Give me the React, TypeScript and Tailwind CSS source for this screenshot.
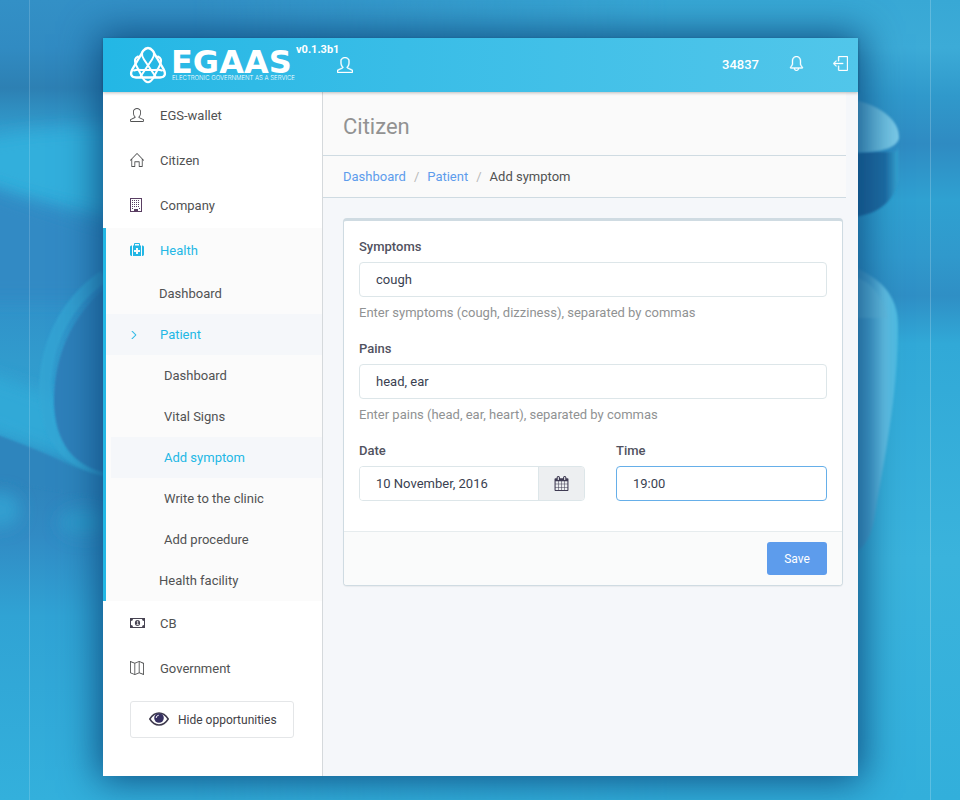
import React, { useState } from "react";
import { SlUser, SlHome, SlBell, SlLogout, SlMap, SlArrowRight } from "react-icons/sl";

function Backdrop() {
  return (
    <svg
      className="absolute inset-0 h-full w-full"
      viewBox="0 0 960 800"
      preserveAspectRatio="none"
      aria-hidden="true"
    >
      <defs>
        <linearGradient id="leftSide" x1="0" y1="0" x2="0" y2="1">
          <stop offset="0" stopColor="#3390c6" />
          <stop offset="0.06" stopColor="#318bc2" />
          <stop offset="0.11" stopColor="#2d80b3" />
          <stop offset="0.16" stopColor="#319bcc" />
          <stop offset="0.22" stopColor="#31a5d5" />
          <stop offset="0.3" stopColor="#318bc4" />
          <stop offset="0.36" stopColor="#308fc8" />
          <stop offset="0.45" stopColor="#319bcd" />
          <stop offset="0.53" stopColor="#309fd0" />
          <stop offset="0.59" stopColor="#2e83ba" />
          <stop offset="0.67" stopColor="#318bc4" />
          <stop offset="0.77" stopColor="#30a3d4" />
          <stop offset="1" stopColor="#33b0dc" />
        </linearGradient>
        <linearGradient id="rightSide" x1="0" y1="0" x2="0" y2="1">
          <stop offset="0" stopColor="#38a8d5" />
          <stop offset="0.06" stopColor="#3cabd7" />
          <stop offset="0.12" stopColor="#3099cb" />
          <stop offset="0.18" stopColor="#2f8bc2" />
          <stop offset="0.25" stopColor="#2fa1d1" />
          <stop offset="0.32" stopColor="#3099cc" />
          <stop offset="0.37" stopColor="#2f8fc5" />
          <stop offset="0.43" stopColor="#31a9d7" />
          <stop offset="0.7" stopColor="#3ab3dc" />
          <stop offset="1" stopColor="#32afdb" />
        </linearGradient>
        <linearGradient id="sideMask" x1="0" y1="0" x2="1" y2="0">
          <stop offset="0.2" stopColor="#000" />
          <stop offset="0.7" stopColor="#fff" />
        </linearGradient>
        <mask id="rightMask">
          <rect width="960" height="800" fill="url(#sideMask)" />
        </mask>
        <linearGradient id="cap" x1="0" y1="0" x2="1" y2="0">
          <stop offset="0" stopColor="#4fa7cf" />
          <stop offset="1" stopColor="#7ccbe8" />
        </linearGradient>
        <linearGradient id="capSide" x1="0" y1="0" x2="1" y2="0">
          <stop offset="0" stopColor="#15578c" />
          <stop offset="0.75" stopColor="#1f6ca3" />
          <stop offset="1" stopColor="#35a5d2" />
        </linearGradient>
        <linearGradient id="glass" x1="0" y1="0" x2="1" y2="0">
          <stop offset="0" stopColor="#3f9aca" />
          <stop offset="0.45" stopColor="#4aa5d1" />
          <stop offset="0.75" stopColor="#62c0e4" />
          <stop offset="1" stopColor="#4dbce2" />
        </linearGradient>
        <filter id="soft" x="-20%" y="-20%" width="140%" height="140%">
          <feGaussianBlur stdDeviation="1" />
        </filter>
        <filter id="haze" x="-150%" y="-150%" width="400%" height="400%">
          <feGaussianBlur stdDeviation="8" />
        </filter>
      </defs>
      <rect width="960" height="800" fill="url(#leftSide)" />
      <rect width="960" height="800" fill="url(#rightSide)" mask="url(#rightMask)" />
      <path d="M-20 140 Q60 125 130 130 V215 Q50 205 -20 180Z" fill="#32afdc" filter="url(#haze)" />
      <path d="M-20 185 Q50 212 130 235 V300 H-20Z" fill="#318ac4" filter="url(#haze)" />
      <path d="M-20 370 Q40 390 110 420 V474 Q50 458 -20 425Z" fill="#32acd9" opacity="0.8" filter="url(#haze)" />
      <path d="M-5 434 Q45 452 75 468 L110 474 V500 L-5 480Z" fill="#2e85bd" filter="url(#soft)" />
      <path d="M104 276 C62 305 44 350 45 395 C46 430 62 462 104 470" fill="none" stroke="#34a7d5" strokeWidth="12" opacity="0.7" filter="url(#soft)" />
      <path d="M110 284 C70 315 53 360 54 405 C56 440 70 466 110 474Z" fill="#2e80ba" filter="url(#soft)" />
      <ellipse cx="0" cy="510" rx="20" ry="18" fill="#309fd0" filter="url(#haze)" />
      <ellipse cx="85" cy="523" rx="26" ry="14" fill="#2f9acb" filter="url(#haze)" />
      <path d="M846 145 L858 152 H895 C900 152 898 133 898 133 V180 C894 204 875 216 846 218Z" fill="url(#capSide)" filter="url(#soft)" />
      <path d="M846 98 C880 104 900 120 899 138 C896 152 870 152 846 153Z" fill="url(#cap)" filter="url(#soft)" />
      <path d="M846 264 C880 276 898 295 898 325 C898 400 882 470 874 520 Q868 552 846 556Z" fill="url(#glass)" filter="url(#soft)" />
      <path d="M853 276 Q880 284 888 318 L853 318Z" fill="#65bcde" opacity="0.6" filter="url(#soft)" />
      <path d="M29.5 0V800" stroke="#fff" strokeOpacity="0.16" />
      <path d="M930.5 0V800" stroke="#fff" strokeOpacity="0.2" />
    </svg>
  );
}

function LogoMark() {
  return (
    <svg className="h-[38px] w-[38px] shrink-0" viewBox="0 0 38 38" fill="none" stroke="#fff" aria-hidden="true">
      <g strokeLinecap="round" strokeLinejoin="round">
        <path
          d="M14 5 Q19 -1 24 5 Q26 9 28 12 L34.500 23 Q38.500 31 31 31.500 H7 Q-0.500 31 3.500 23 L10 12 Q12 9 14 5Z"
          strokeWidth="2.400"
        />
        <path
          d="M9 10.500 Q4.500 12.500 6.500 18 L14 32.500 Q19 40 24 32.500 L31.500 18 Q33.500 12.500 29 10.500"
          strokeWidth="2"
        />
        <path d="M13 6.500 Q12.500 10 15 13.500 L26.500 30.500M25 6.500 Q25.500 10 23 13.500 L11.500 30.500" strokeWidth="2" />
        <path d="M5 24.500 Q8 23.500 12 24 H26 Q30 23.500 33 24.500" strokeWidth="2" />
      </g>
    </svg>
  );
}

function BuildingIcon() {
  return (
    <svg className="h-[14px] w-[12px]" viewBox="0 0 12 14" aria-hidden="true">
      <rect x="0.500" y="0.500" width="11" height="13" fill="none" stroke="#5a3f63" />
      {[2, 4, 6, 8].map((y) => (
        <path key={y} d={`M2 ${y + 0.5}H10`} stroke="#5a3f63" strokeDasharray="1 1" />
      ))}
      <path d="M2 10.500H3M9 10.500H10" stroke="#5a3f63" />
      <rect x="4" y="11" width="4" height="2.500" fill="#5a3f63" />
    </svg>
  );
}

function MedkitIcon() {
  return (
    <svg className="h-[13px] w-[14px]" viewBox="0 0 14 13" fill="currentColor" aria-hidden="true">
      <path
        fillRule="evenodd"
        d="M4 2.500V1Q4 0 5 0H9Q10 0 10 1V2.500H11V13H3V2.500ZM5 2.500H9V1H5ZM6 5V7H4V9H6V11H8V9H10V7H8V5Z"
      />
      <path d="M2 2.500V13H1.400Q0 13 0 11.600V4Q0 2.500 1.400 2.500ZM12 2.500V13H12.600Q14 13 14 11.600V4Q14 2.500 12.600 2.500Z" />
    </svg>
  );
}

function MoneyIcon() {
  return (
    <svg className="h-[10px] w-[15px]" viewBox="0 0 15 10" aria-hidden="true">
      <path
        fill="#474352"
        fillRule="evenodd"
        d="M0 0H15V10H0ZM3 1Q3 3 1 3V7Q3 7 3 9H12Q12 7 14 7V3Q12 3 12 1Z"
      />
      <ellipse cx="7.500" cy="5" rx="2.600" ry="3" fill="#474352" />
      <path d="M6.800 3.800L7.700 3.200V6.500M6.500 6.600H8.800" stroke="#fff" strokeWidth="0.800" fill="none" />
    </svg>
  );
}

function EyeIcon() {
  return (
    <svg className="h-[14px] w-[20px]" viewBox="0 0 20 14" aria-hidden="true">
      <path d="M0.800 7Q4.500 1 10 1T19.200 7Q15.500 13 10 13T0.800 7Z" fill="#fff" stroke="#3e3a4c" strokeWidth="1.500" />
      <circle cx="10" cy="6" r="4.800" fill="#363061" />
      <path d="M7.200 6Q7.200 3.400 9.800 3.200" stroke="#fff" strokeWidth="0.900" fill="none" />
    </svg>
  );
}

function CalendarIcon() {
  return (
    <svg className="h-[15px] w-[15px]" viewBox="0 0 1792 1792" fill="#3f3b53" aria-hidden="true">
      <path d="M192 1664h288v-288h-288v288zm352 0h320v-288h-320v288zm-352-352h288v-320h-288v320zm352 0h320v-320h-320v320zm-352-384h288v-288h-288v288zm736 736h320v-288h-320v288zm-384-736h320v-288h-320v288zm768 736h288v-288h-288v288zm-384-352h320v-320h-320v320zm-352-864v-288q0-13-9.500-22.500t-22.500-9.500h-64q-13 0-22.500 9.500t-9.500 22.500v288q0 13 9.500 22.500t22.500 9.500h64q13 0 22.500-9.500t9.500-22.500zm736 864h288v-320h-288v320zm-384-384h320v-288h-320v288zm384 0h288v-288h-288v288zm32-480v-288q0-13-9.500-22.500t-22.500-9.500h-64q-13 0-22.500 9.500t-9.500 22.500v288q0 13 9.500 22.500t22.500 9.500h64q13 0 22.500-9.500t9.500-22.500zm384-64v1280q0 52-38 90t-90 38h-1408q-52 0-90-38t-38-90v-1280q0-52 38-90t90-38h128v-96q0-66 47-113t113-47h64q66 0 113 47t47 113v96h384v-96q0-66 47-113t113-47h64q66 0 113 47t47 113v96h128q52 0 90 38t38 90z" />
    </svg>
  );
}

function MenuItem({ icon, label, active = false }: { icon: React.ReactNode; label: string; active?: boolean }) {
  return (
    <a
      href="#"
      className={`flex h-[45px] items-center pl-6 ${active ? "text-[#23b7e5]" : "text-[#515253]"}`}
    >
      <span className="flex w-[30px] shrink-0 items-center pb-[2px]">{icon}</span>
      {label}
    </a>
  );
}

function SubItem({ label, active = false, nested = false }: { label: string; active?: boolean; nested?: boolean }) {
  return (
    <a
      href="#"
      className={`flex h-[41px] items-center pl-[53px] ${nested ? "ml-[5px]" : ""} ${
        active ? "bg-[#f5f7fa] text-[#23b7e5]" : "text-[#515253]"
      }`}
    >
      {label}
    </a>
  );
}

const inputClass =
  "h-[35px] w-full min-w-0 rounded-[4px] border border-[#dde6e9] bg-white px-4 text-[#3a3f51] outline-none";
const labelClass = "mb-[5px] block font-medium text-[#515260]";

function Field({
  id,
  label,
  initial,
  help,
}: {
  id: string;
  label: string;
  initial: string;
  help: string;
}) {
  const [value, setValue] = useState(initial);
  return (
    <div className="mb-4">
      <label htmlFor={id} className={labelClass}>
        {label}
      </label>
      <input id={id} className={inputClass} value={value} onChange={(e) => setValue(e.target.value)} />
      <p className="mt-[6px] text-[#909293]">{help}</p>
    </div>
  );
}

export default function App() {
  const [date, setDate] = useState("10 November, 2016");
  const [time, setTime] = useState("19:00");
  const [expanded, setExpanded] = useState(true);

  return (
    <div className="relative isolate flex min-h-screen bg-[#31a5d5] pt-[38px] pr-[102px] pb-6 pl-[103px] font-['Roboto',sans-serif] text-[13px] leading-5">
      <div className="absolute inset-0 -z-10 overflow-hidden">
        <Backdrop />
      </div>
      <div className="flex min-w-0 flex-1 flex-col bg-[#f5f7fa] shadow-[0_0_36px_4px_#0f4f82]">
        <header className="z-10 flex h-[54px] shrink-0 items-center bg-linear-to-r from-[#23b7e5] to-[#51c6ea] pr-[10px] pl-[26px] text-white shadow-[0_1px_3px_#00000040]">
          <LogoMark />
          <div className="flex w-[129px] flex-col pl-1">
            <span className="font-['DejaVu_Sans',sans-serif] text-[32px] leading-6 font-bold">EGAAS</span>
            <span className="pt-px pl-px font-['Inter',sans-serif] text-[6px] leading-[6px] font-light whitespace-nowrap">
              ELECTRONIC GOVERNMENT AS A SERVICE
            </span>
          </div>
          <div className="flex flex-col items-end self-start pt-[5px]">
            <span className="text-[11px] leading-[14px] font-bold">v0.1.3b1</span>
            <a href="#" aria-label="Profile" className="-mr-[14px]">
              <SlUser size={16} className="stroke-[24]" />
            </a>
          </div>
          <span className="ml-auto pr-[30px] font-medium">34837</span>
          <button type="button" aria-label="Notifications" className="mr-[29px] pb-1">
            <SlBell size={15} className="stroke-[24]" />
          </button>
          <button type="button" aria-label="Log out" className="pb-1">
            <SlLogout size={15} className="stroke-[24]" />
          </button>
        </header>

        <div className="flex flex-1">
          <nav className="w-[220px] shrink-0 border-r border-[#d5d9dc] bg-white pt-px">
            <div className="pl-[3px]">
              <MenuItem icon={<SlUser size={14} />} label="EGS-wallet" />
              <MenuItem icon={<SlHome size={14} />} label="Citizen" />
              <MenuItem icon={<BuildingIcon />} label="Company" />
            </div>
            <div className="border-l-3 border-[#23b7e5] bg-[#fbfbfb]">
              <MenuItem icon={<MedkitIcon />} label="Health" active />
              <SubItem label="Dashboard" />
              <a href="#" className="flex h-[41px] items-center bg-[#f5f7fa] pl-6 text-[#23b7e5]">
                <span className="w-[30px]">
                  <SlArrowRight size={8} className="stroke-[60]" />
                </span>
                Patient
              </a>
              <SubItem label="Dashboard" nested />
              <SubItem label="Vital Signs" nested />
              <SubItem label="Add symptom" nested active />
              <SubItem label="Write to the clinic" nested />
              <SubItem label="Add procedure" nested />
              <SubItem label="Health facility" />
            </div>
            <div className="pl-[3px]">
              <MenuItem icon={<MoneyIcon />} label="CB" />
              <MenuItem icon={<SlMap size={14} />} label="Government" />
            </div>
            <button
              type="button"
              aria-pressed={expanded}
              onClick={() => setExpanded(!expanded)}
              className="mt-[10px] ml-[27px] flex h-[37px] w-[164px] items-center rounded-[3px] border border-[#e4e6e8] bg-white pl-[18px] text-[12px] whitespace-nowrap text-[#3f4045]"
            >
              <span className="mr-[9px] pb-[2px]">
                <EyeIcon />
              </span>
              Hide opportunities
            </button>
          </nav>

          <main className="min-w-0 flex-1">
            <div className="mr-3 bg-[#fafafa]">
              <h1 className="flex h-16 items-center border-b border-[#cfdbe2] pt-[6px] pl-5 text-[22px] text-[#929292]">
                Citizen
              </h1>
              <nav
                aria-label="Breadcrumb"
                className="flex h-[42px] items-center gap-2 border-b border-[#cfdbe2] pl-5 text-[#515253]"
              >
                <a href="#" className="text-[#5d9cec]">Dashboard</a>
                <span className="text-[#b8b8b8]">/</span>
                <a href="#" className="text-[#5d9cec]">Patient</a>
                <span className="text-[#b8b8b8]">/</span>
                <span>Add symptom</span>
              </nav>
            </div>

            <form
              onSubmit={(e) => e.preventDefault()}
              className="mt-5 mr-[15px] mb-5 ml-5 rounded-[4px] border border-t-3 border-[#cfdbe2] bg-white shadow-[0_1px_1px_#0000000d]"
            >
              <div className="px-[15px] pt-4 pb-[30px]">
                <Field
                  id="symptoms"
                  label="Symptoms"
                  initial="cough"
                  help="Enter symptoms (cough, dizziness), separated by commas"
                />
                <Field
                  id="pains"
                  label="Pains"
                  initial="head, ear"
                  help="Enter pains (head, ear, heart), separated by commas"
                />
                <div className="grid grid-cols-[minmax(0,226fr)_minmax(0,211fr)] gap-[31px]">
                  <div>
                    <label htmlFor="date" className={labelClass}>
                      Date
                    </label>
                    <div className="flex h-[35px] overflow-hidden rounded-[4px] border border-[#dde6e9]">
                      <input
                        id="date"
                        value={date}
                        onChange={(e) => setDate(e.target.value)}
                        className="min-w-0 flex-1 bg-white px-4 text-[#3a3f51] outline-none"
                      />
                      <button
                        type="button"
                        aria-label="Pick a date"
                        className="flex w-[46px] items-center justify-center border-l border-[#dde6e9] bg-[#edeff1]"
                      >
                        <CalendarIcon />
                      </button>
                    </div>
                  </div>
                  <div>
                    <label htmlFor="time" className={labelClass}>
                      Time
                    </label>
                    <input
                      id="time"
                      value={time}
                      onChange={(e) => setTime(e.target.value)}
                      className="h-[35px] w-full min-w-0 rounded-[4px] border border-[#66afe9] bg-white px-4 text-[#3a3f51] outline-none"
                    />
                  </div>
                </div>
              </div>
              <div className="flex justify-end rounded-b-[3px] border-t border-[#e6ecee] bg-[#fafbfb] px-[15px] py-[10px]">
                <button
                  type="submit"
                  className="h-[33px] w-[60px] rounded-[3px] bg-[#5d9cec] text-[12px] text-white"
                >
                  Save
                </button>
              </div>
            </form>
          </main>
        </div>
      </div>
    </div>
  );
}
